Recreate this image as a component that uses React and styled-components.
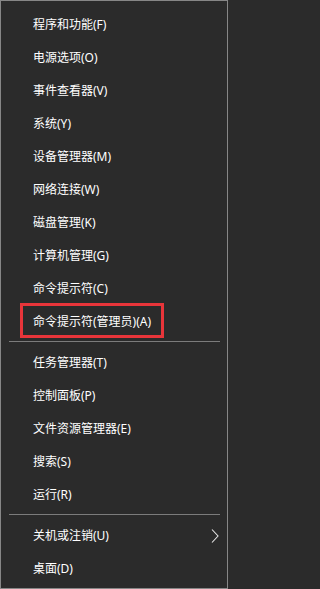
import React from "react";
import styled, { createGlobalStyle } from "styled-components";

const GlobalStyle = createGlobalStyle`
  html, body {
    margin: 0;
    padding: 0;
    background: #2b2b2b;
  }
`;

const Menu = styled.div`
  width: 228px;
  height: 589px;
  box-sizing: border-box;
  border: 1px solid #878787;
  background: #2b2b2b;
  padding-top: 7px;
  font-family: "Noto Sans", "Noto Sans CJK SC", sans-serif;
  font-size: 12px;
  color: #ffffff;
  overflow: hidden;
`;

const Item = styled.div`
  position: relative;
  height: 33px;
  display: flex;
  align-items: center;
  padding-left: 32px;
  padding-right: 8px;
  box-sizing: border-box;
  white-space: nowrap;
`;

const Label = styled.span`
  flex: 1;
  line-height: 16px;
`;

const Highlight = styled.div`
  position: absolute;
  left: 19px;
  top: -2px;
  width: 144px;
  height: 35px;
  box-sizing: border-box;
  border: 3px solid #e8353a;
  pointer-events: none;
`;

const Separator = styled.div`
  height: 1px;
  margin: 3px 7px 4px 8px;
  background: #7c7c7c;
`;

const Chevron = () => (
  <svg width="8" height="14" viewBox="0 0 8 14">
    <path d="M1 0.5 L7 7 L1 13.5" fill="none" stroke="#e8e8e8" strokeWidth="1.1" />
  </svg>
);

const groups = [
  [
    { label: "程序和功能(F)" },
    { label: "电源选项(O)" },
    { label: "事件查看器(V)" },
    { label: "系统(Y)" },
    { label: "设备管理器(M)" },
    { label: "网络连接(W)" },
    { label: "磁盘管理(K)" },
    { label: "计算机管理(G)" },
    { label: "命令提示符(C)" },
    { label: "命令提示符(管理员)(A)", marked: true },
  ],
  [
    { label: "任务管理器(T)" },
    { label: "控制面板(P)" },
    { label: "文件资源管理器(E)" },
    { label: "搜索(S)" },
    { label: "运行(R)" },
  ],
  [
    { label: "关机或注销(U)", submenu: true },
    { label: "桌面(D)" },
  ],
];

export default function App() {
  return (
    <>
      <GlobalStyle />
      <Menu>
        {groups.map((items, gi) => (
          <React.Fragment key={gi}>
            {gi > 0 && <Separator />}
            {items.map((item) => (
              <Item key={item.label}>
                <Label>{item.label}</Label>
                {item.submenu && <Chevron />}
                {item.marked && <Highlight />}
              </Item>
            ))}
          </React.Fragment>
        ))}
      </Menu>
    </>
  );
}
